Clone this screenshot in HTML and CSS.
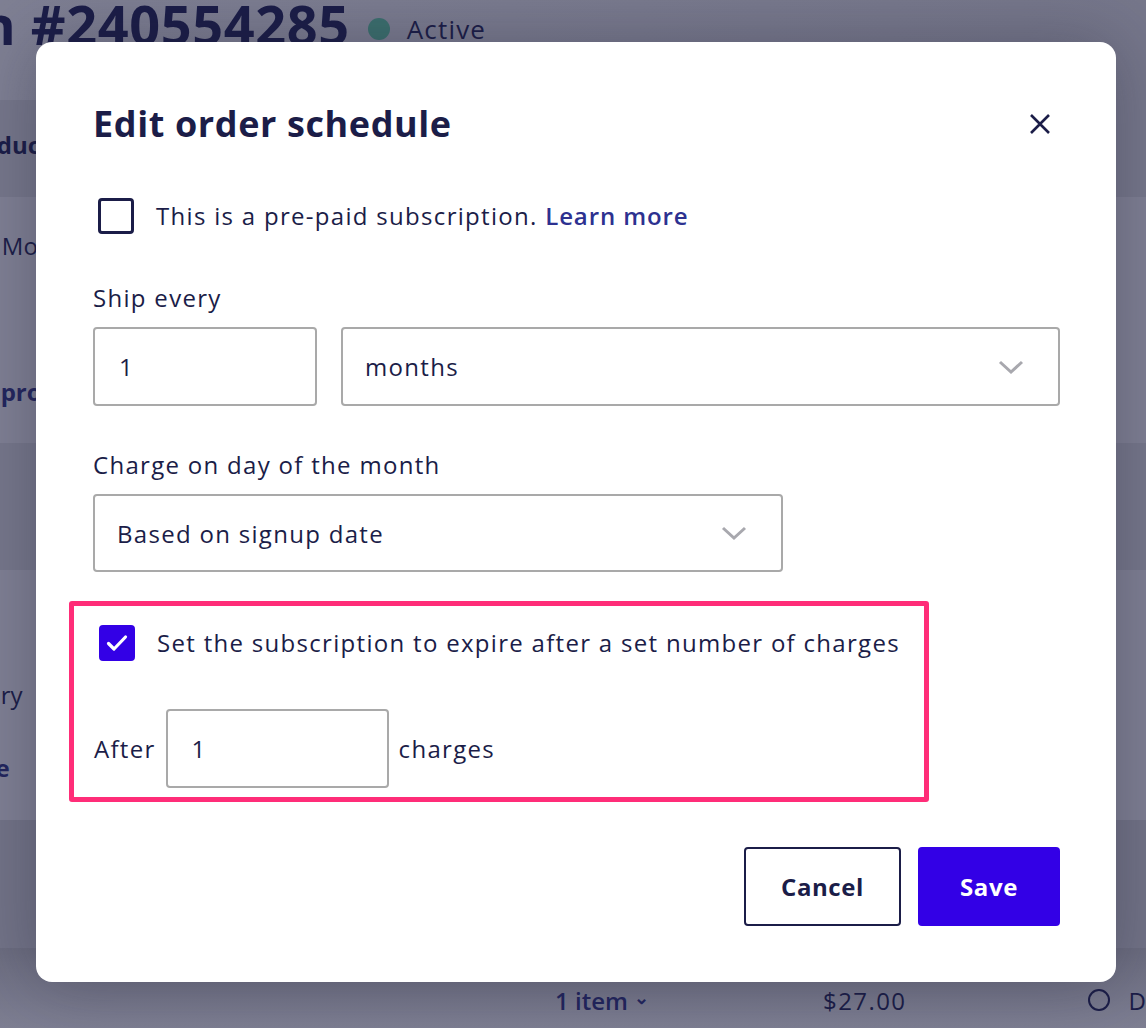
FILE: index.html
```html
<!DOCTYPE html>
<html lang="en">
<head>
    <meta charset="UTF-8">
    <meta name="viewport" content="width=device-width, initial-scale=1.0">
    <title>Edit order schedule</title>
    <link rel="stylesheet" href="styles.css">
</head>
<body>
    <div class="page">
        <div class="band band-head">
            <h1 class="sub-title">Subscription #240554285</h1>
            <span class="status"><span class="status-dot"></span>Active</span>
        </div>
        <div class="band band-dark band-cols">
            <span class="col-title">Product</span>
        </div>
        <div class="band band-light band-rows">
            <span class="cell cell-mo">Every 1 Month</span>
            <span class="cell cell-link">Swap product</span>
        </div>
        <div class="band band-dark band-short"></div>
        <div class="band band-light band-rows2">
            <span class="cell cell-ry">Next delivery</span>
            <span class="cell cell-link cell-e">Change date</span>
        </div>
        <div class="band band-dark band-mid"></div>
        <div class="band band-light band-foot">
            <span class="foot-items">1 item <span class="foot-caret">&#8964;</span></span>
            <span class="foot-price">$27.00</span>
            <span class="foot-radio"></span>
            <span class="foot-d">D</span>
        </div>
    </div>

    <div class="modal">
        <div class="modal-header">
            <h2 class="modal-title">Edit order schedule</h2>
            <button class="close-btn" aria-label="Close">
                <svg width="22" height="22" viewBox="0 0 22 22"><path d="M2 2 L20 20 M20 2 L2 20" stroke="#1b1d48" stroke-width="2.6" fill="none"/></svg>
            </button>
        </div>

        <label class="check-row first-check">
            <span class="box"></span>
            <span>This is a pre-paid subscription. <a class="link" href="#">Learn more</a></span>
        </label>

        <div class="field-label">Ship every</div>
        <div class="ship-row">
            <div class="input input-small">1</div>
            <div class="input select select-wide">months
                <svg class="chev" width="26" height="16" viewBox="0 0 26 16"><path d="M2 3 L13 13 L24 3" stroke="#a8a8ae" stroke-width="3" fill="none"/></svg>
            </div>
        </div>

        <div class="field-label field-label-second">Charge on day of the month</div>
        <div class="input select select-mid">Based on signup date
            <svg class="chev" width="26" height="16" viewBox="0 0 26 16"><path d="M2 3 L13 13 L24 3" stroke="#a8a8ae" stroke-width="3" fill="none"/></svg>
        </div>

        <div class="highlight">
            <label class="check-row">
                <span class="box box-checked">
                    <svg width="22" height="18" viewBox="0 0 22 18"><path d="M2.5 9.5 L8 15 L19.5 3" stroke="#fff" stroke-width="3.2" fill="none" stroke-linecap="round" stroke-linejoin="round"/></svg>
                </span>
                <span>Set the subscription to expire after a set number of charges</span>
            </label>
            <div class="after-row">
                <span>After</span>
                <div class="input input-charges">1</div>
                <span>charges</span>
            </div>
        </div>

        <div class="actions">
            <button class="btn btn-cancel">Cancel</button>
            <button class="btn btn-save">Save</button>
        </div>
    </div>
</body>
</html>
```

FILE: styles.css
```css
body {
    margin: 0;
    font-family: "Open Sans", "Noto Sans", sans-serif;
    color: #1b1d48;
    overflow: hidden;
}

.page {
    width: 1146px;
    height: 1028px;
    overflow: hidden;
    background-color: #7d7e92;
}

.band {
    display: flex;
    align-items: flex-start;
    position: relative;
}

.band > * {
    flex: none;
    white-space: nowrap;
}

.band-head {
    height: 100px;
    background: linear-gradient(90deg, #7f8094 0%, #76778b 100%);
}

.sub-title {
    margin: -6px 0 0 -329px;
    font-size: 54px;
    line-height: 60px;
    font-weight: 700;
    letter-spacing: 0.6px;
}

.status {
    display: flex;
    align-items: center;
    font-size: 26px;
    line-height: 30px;
    letter-spacing: 1.2px;
    margin: 14px 0 0 18px;
}

.status-dot {
    width: 22px;
    height: 22px;
    border-radius: 50%;
    background-color: #3c716f;
    margin-right: 17px;
}

.band-dark {
    background-color: #77788c;
}

.band-light {
    background-color: #808195;
}

.band-cols {
    height: 97px;
    padding-top: 28px;
    box-sizing: border-box;
}

.col-title {
    font-size: 24px;
    font-weight: 700;
    margin-left: -44px;
}

.band-rows {
    height: 246px;
    flex-direction: column;
}

.cell {
    font-size: 24px;
}

.cell-mo {
    margin: 32px 0 0 -85px;
}

.cell-link {
    font-weight: 700;
    color: #23265e;
    margin: 113px 0 0 -69px;
}

.band-short {
    height: 127px;
}

.band-rows2 {
    height: 250px;
    flex-direction: column;
}

.cell-ry {
    margin: 108px 0 0 -124px;
}

.cell-e {
    margin: 40px 0 0 -140px;
}

.band-mid {
    height: 128px;
    background-color: #737488;
}

.band-foot {
    height: 80px;
    background: linear-gradient(180deg, #6c6d80 0%, #7e7f93 100%);
    align-items: center;
    padding-top: 24px;
    box-sizing: border-box;
}

.foot-items {
    font-size: 24px;
    font-weight: 600;
    color: #22255e;
    margin-left: 555px;
}

.foot-caret {
    font-size: 18px;
    position: relative;
    top: -6px;
}

.foot-price {
    font-size: 24px;
    letter-spacing: 1.4px;
    margin-left: 174px;
}

.foot-radio {
    width: 18px;
    height: 18px;
    border: 2px solid #1b1d48;
    border-radius: 50%;
    margin-left: 182px;
}

.foot-d {
    font-size: 24px;
    margin-left: 18px;
}

/* modal */

.modal {
    position: absolute;
    left: 36px;
    top: 42px;
    width: 1080px;
    height: 940px;
    box-sizing: border-box;
    padding: 60px 56px 56px 57px;
    background-color: #fff;
    border-radius: 16px;
    box-shadow: 0 0 70px rgba(30, 30, 50, 0.35);
    display: flex;
    flex-direction: column;
}

.modal-header {
    display: flex;
    justify-content: space-between;
    align-items: center;
    height: 44px;
}

.modal-title {
    margin: 0;
    font-size: 36px;
    line-height: 44px;
    font-weight: 700;
    letter-spacing: 0.6px;
}

.close-btn {
    background: none;
    border: none;
    padding: 0;
    margin-right: 9px;
    width: 22px;
    height: 22px;
    cursor: pointer;
}

.close-btn svg {
    display: block;
}

.check-row {
    display: flex;
    align-items: center;
    gap: 22px;
    font-size: 24px;
    line-height: 32px;
    letter-spacing: 1.3px;
    cursor: pointer;
}

.first-check {
    margin-top: 52px;
}

.box {
    width: 30px;
    height: 30px;
    border: 3px solid #1b1d48;
    border-radius: 4px;
    margin-left: 5px;
    flex: none;
    display: flex;
    align-items: center;
    justify-content: center;
}

.box-checked {
    background-color: #3300e6;
    border-color: #3300e6;
}

.link {
    color: #2d3190;
    font-weight: 600;
    letter-spacing: 0.9px;
    text-decoration: none;
}

.field-label {
    font-size: 24px;
    letter-spacing: 1.3px;
    line-height: 32px;
    margin-top: 48px;
    margin-bottom: 13px;
}

.field-label-second {
    margin-top: 43px;
}

.ship-row {
    display: flex;
    gap: 24px;
}

.input {
    height: 79px;
    box-sizing: border-box;
    border: 2px solid #a9a9a9;
    border-radius: 4px;
    padding: 0 22px;
    display: flex;
    align-items: center;
    font-size: 24px;
    letter-spacing: 1.3px;
}

.input-small {
    width: 224px;
    padding-left: 24px;
}

.select {
    justify-content: space-between;
}

.select-wide {
    flex: 1;
}

.select-mid {
    width: 690px;
}

.chev {
    margin-right: 12px;
}

.highlight {
    margin: 29px 0 0 -24px;
    width: 860px;
    box-sizing: border-box;
    border: 5px solid #ff2d78;
    border-radius: 3px;
    padding: 19px 20px 9px 20px;
}

.after-row {
    display: flex;
    align-items: center;
    gap: 10px;
    margin-top: 48px;
    font-size: 24px;
    letter-spacing: 1.3px;
}

.input-charges {
    width: 223px;
    padding-left: 24px;
}

.actions {
    display: flex;
    justify-content: flex-end;
    gap: 17px;
    margin-top: 45px;
}

.btn {
    height: 79px;
    font-family: "Open Sans", "Noto Sans", sans-serif;
    font-size: 24px;
    font-weight: 700;
    border-radius: 4px;
    cursor: pointer;
    letter-spacing: 0.6px;
}

.btn-cancel {
    width: 157px;
    background-color: #fff;
    color: #1b1d48;
    border: 2px solid #1b1d48;
}

.btn-save {
    width: 142px;
    background-color: #3300e6;
    color: #fff;
    border: none;
}
```
